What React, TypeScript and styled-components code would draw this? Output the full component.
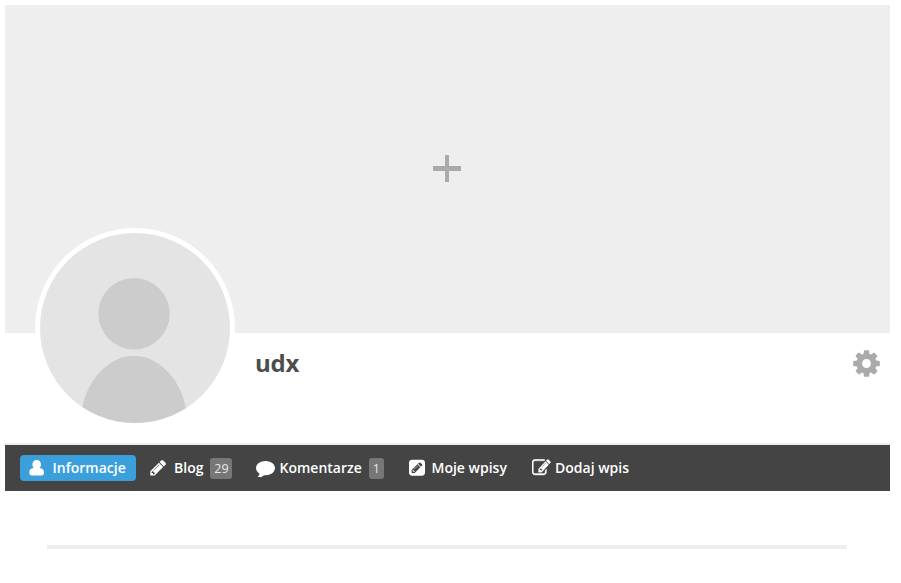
import React from "react";
import styled, { createGlobalStyle } from "styled-components";

const GlobalStyle = createGlobalStyle`
  * { box-sizing: border-box; }
  body { margin: 0; background: #fff; font-family: "Open Sans", sans-serif; }
`;

const Page = styled.div`
  width: 885px;
  margin: 5px 0 0 5px;
`;

const Cover = styled.div`
  height: 328px;
  background: #eee;
  display: flex;
  justify-content: center;
  padding-top: 150px;
`;

const PlusIcon = styled.svg`
  width: 28px;
  height: 27px;
  margin-right: 1px;
  fill: #aaa;
`;

const Header = styled.header`
  height: 112px;
  display: flex;
  align-items: flex-start;
  padding: 0 9px 0 30px;
  border-bottom: 2px solid #eee;
`;

const Avatar = styled.div`
  width: 200px;
  height: 200px;
  margin-top: -105px;
  border: 5px solid #fff;
  border-radius: 50%;
  background: #fff;
  svg { display: block; border-radius: 50%; }
`;

const UserName = styled.h1`
  margin: 13px auto 0 20px;
  font-size: 24px;
  line-height: 33px;
  letter-spacing: -0.2px;
  font-weight: 700;
  color: #4d4d4d;
`;

const GearIcon = styled.svg`
  width: 31px;
  height: 31px;
  margin: 15px -1px 0 0;
  fill: #aaa;
`;

const Nav = styled.nav`
  height: 46px;
  display: flex;
  align-items: center;
  padding-left: 15px;
  background: #444;
`;

const Tab = styled.a<{ $active?: boolean; $width: number }>`
  width: ${(p) => p.$width}px;
  height: 26px;
  display: flex;
  align-items: center;
  padding-left: ${(p) => (p.$active ? 7 : 0)}px;
  margin-right: ${(p) => (p.$active ? 12 : 0)}px;
  border-radius: 4px;
  background: ${(p) => (p.$active ? "#3b9fdc" : "transparent")};
  color: #fff;
  font-size: 14px;
  line-height: 20px;
  font-weight: 600;
  white-space: nowrap;
`;

const TabIcon = styled.svg<{ $gap: number; $stroke?: number }>`
  width: 19px;
  height: 18px;
  flex: none;
  margin-right: ${(p) => p.$gap}px;
  fill: #fff;
  stroke: #fff;
  stroke-width: ${(p) => p.$stroke ?? 0};
`;

const Badge = styled.span<{ $width: number }>`
  width: ${(p) => p.$width}px;
  height: 21px;
  margin: 1px 0 0 7px;
  border-radius: 3px;
  background: #777;
  color: #e8e8e8;
  font-size: 12.5px;
  line-height: 21px;
  font-weight: 400;
  text-align: center;
`;

const Divider = styled.hr`
  width: 800px;
  height: 4px;
  margin: 54px 0 0 42px;
  border: 0;
  background: #eee;
`;

const paths = {
  user: "M9.7 1C12.3 1 14 3 14 5.5C14 6.9 13.4 8.1 12.6 8.9C15.6 9 17 10.8 17 13.7C17 15.5 16 16.5 14.3 16.5H5C3.300 16.5 2.300 15.500 2.300 13.700C2.300 10.800 3.800 9 6.700 8.900C5.900 8.100 5.400 6.900 5.400 5.500C5.400 3 7.100 1 9.700 1z",
  pencil: "M491 1536l91-91-235-235-91 91v107h128v128h107zm523-928q0-22-22-22-10 0-17 7l-542 542q-7 7-7 17 0 22 22 22 10 0 17-7l542-542q7-7 7-17zm-54-192l416 416-832 832h-416v-416zm683 96q0 53-37 90l-166 166-416-416 166-165q36-38 90-38 53 0 91 38l235 234q37 39 37 91z",
  comment: "M1792 896q0 174-120 321.5t-326 233-450 85.5q-70 0-145-8-198 175-460 242-49 14-114 22-17 2-30.5-9t-17.5-29v-1q-3-4-.5-12t2-10 4.5-9.5l6-9 7-8.5 8-9q7-8 31-34.5t34.5-38 31-39.5 32.5-51 27-59 26-76q-157-89-247.5-220t-90.5-281q0-130 71-248.5t191-204.5 286-136.5 348-50.5q244 0 450 85.5t326 233 120 321.5z",
  square: "M532 1108l152 152-52 52h-88v-96h-96v-56zm414-390q14 13-3 30l-291 291q-17 17-30 3-14-13 3-30l291-291q17-17 30-3zm-274 690l544-544-288-288-544 544v288h288zm608-608l92-92q28-28 28-68t-28-68l-152-152q-28-28-68-28t-68 28l-92 92zm384-384v960q0 119-84.5 203.5t-203.5 84.5h-960q-119 0-203.5-84.5t-84.5-203.5v-960q0-119 84.5-203.5t203.5-84.5h960q119 0 203.5 84.5t84.5 203.5z",
  edit: "M888 1184l116-116-152-152-116 116v56h96v96h56zm440-720q-16-16-33 1l-350 350q-17 17-1 33t33-1l350-350q17-17 1-33zm80 594v190q0 119-84.5 203.5t-203.5 84.5h-832q-119 0-203.5-84.5t-84.5-203.5v-832q0-119 84.5-203.5t203.5-84.5h832q63 0 117 25 15 7 18 23 3 17-9 29l-49 49q-14 14-32 8-23-6-45-6h-832q-66 0-113 47t-47 113v832q0 66 47 113t113 47h832q66 0 113-47t47-113v-126q0-13 9-22l64-64q15-15 35-7t20 29zm-96-738l288 288-672 672h-288v-288zm444 132l-92 92-288-288 92-92q28-28 68-28t68 28l152 152q28 28 28 68t-28 68z",
  gear: "M1152 896q0-106-75-181t-181-75-181 75-75 181 75 181 181 75 181-75 75-181zm512-109v222q0 12-8 23t-20 13l-185 28q-19 54-39 91 35 50 107 138 10 12 10 25t-9 23q-27 37-99 108t-94 71q-12 0-26-9l-138-108q-44 23-91 38-16 136-29 186-7 28-36 28h-222q-14 0-24.5-8.5t-11.5-21.5l-28-184q-49-16-90-37l-141 107q-10 9-25 9-14 0-25-11-126-114-165-168-7-10-7-23 0-12 8-23 15-21 51-66.5t54-70.5q-27-50-41-99l-183-27q-13-2-21-12.5t-8-23.5v-222q0-12 8-23t19-13l186-28q14-46 39-92-40-57-107-138-10-12-10-24 0-10 9-23 26-36 98.5-107.5t94.5-71.5q13 0 26 10l138 107q44-23 91-38 16-136 29-186 7-28 36-28h222q14 0 24.5 8.5t11.5 21.5l28 184q49 16 90 37l142-107q9-9 24-9 13 0 25 10 129 119 165 170 7 8 7 22 0 12-8 23-15 21-51 66.5t-54 70.5q26 50 41 98l183 28q13 2 21 12.5t8 23.5z",
};

type Item = {
  label: string;
  icon: string;
  viewBox: string;
  gap: number;
  width: number;
  stroke?: number;
  active?: boolean;
  count?: number;
  badgeWidth?: number;
};

const items: Item[] = [
  { label: "Informacje", icon: paths.user, viewBox: "0 0 19 18", gap: 6.5, width: 116, active: true },
  { label: "Blog", icon: paths.pencil, viewBox: "-95 52 1843 1746", gap: 7, width: 108, count: 29, badgeWidth: 22 },
  { label: "Komentarze", icon: paths.comment, viewBox: "0 76 1792 1620", gap: 4.5, width: 152, count: 1, badgeWidth: 15 },
  { label: "Moje wpisy", icon: paths.square, viewBox: "32 61 1824 1728", gap: 4.5, width: 124 },
  { label: "Dodaj wpis", icon: paths.edit, viewBox: "0 97 1840 1620", gap: 4, width: 110, stroke: 35 },
];

export default function App() {
  return (
    <>
      <GlobalStyle />
      <Page>
        <Cover>
          <PlusIcon viewBox="0 0 28 27">
            <path d="M12 0h4v11h12v5H16v11h-4V16H0v-5h12z" />
          </PlusIcon>
        </Cover>
        <Header>
          <Avatar>
            <svg width="190" height="190" viewBox="0 0 190 190">
              <rect width="190" height="190" fill="#e4e4e4" />
              <circle cx="94" cy="80.7" r="35.7" fill="#ccc" />
              <ellipse cx="94" cy="194" rx="54" ry="71" fill="#ccc" />
            </svg>
          </Avatar>
          <UserName>udx</UserName>
          <GearIcon viewBox="0 0 1792 1792">
            <path d={paths.gear} />
          </GearIcon>
        </Header>
        <Nav>
          {items.map((item) => (
            <Tab key={item.label} $active={item.active} $width={item.width}>
              <TabIcon viewBox={item.viewBox} $gap={item.gap} $stroke={item.stroke} preserveAspectRatio="none">
                <path d={item.icon} />
              </TabIcon>
              {item.label}
              {item.count !== undefined && <Badge $width={item.badgeWidth ?? 20}>{item.count}</Badge>}
            </Tab>
          ))}
        </Nav>
        <Divider />
      </Page>
    </>
  );
}
